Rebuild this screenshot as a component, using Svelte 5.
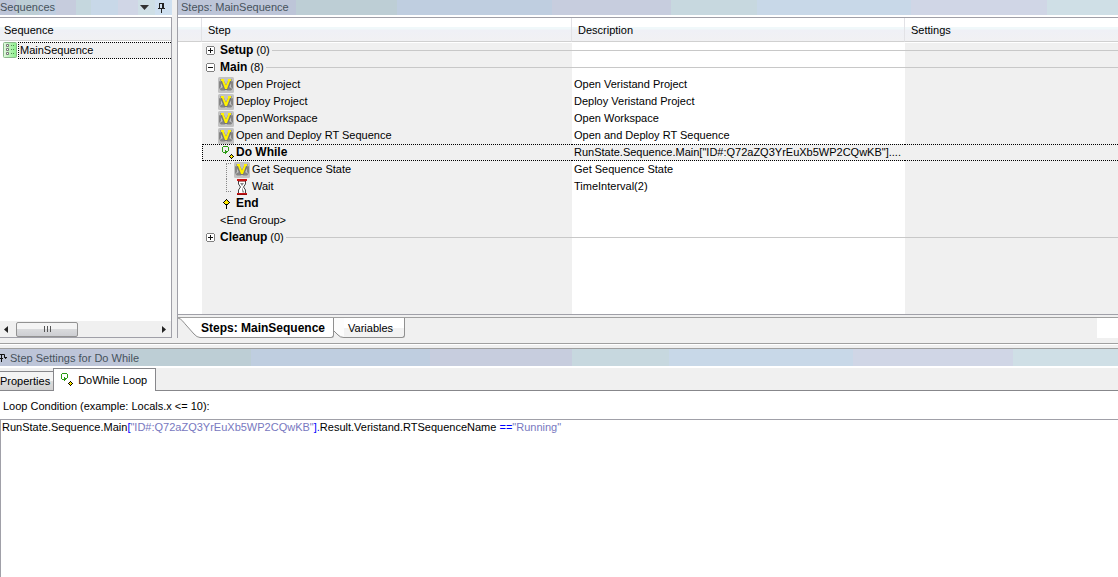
<script>
  const steps = [
    { kind: 'group', name: 'Setup', count: 0, open: false },
    { kind: 'group', name: 'Main', count: 8, open: true },
    { kind: 'step', icon: 'v', name: 'Open Project', desc: 'Open Veristand Project' },
    { kind: 'step', icon: 'v', name: 'Deploy Project', desc: 'Deploy Veristand Project' },
    { kind: 'step', icon: 'v', name: 'OpenWorkspace', desc: 'Open Workspace' },
    { kind: 'step', icon: 'v', name: 'Open and Deploy RT Sequence', desc: 'Open and Deploy RT Sequence' },
    { kind: 'step', icon: 'loop', bold: true, selected: true, name: 'Do While', desc: 'RunState.Sequence.Main["ID#:Q72aZQ3YrEuXb5WP2CQwKB"]....' },
    { kind: 'step', icon: 'v', nested: true, first: true, name: 'Get Sequence State', desc: 'Get Sequence State' },
    { kind: 'step', icon: 'wait', nested: true, last: true, name: 'Wait', desc: 'TimeInterval(2)' },
    { kind: 'step', icon: 'end', bold: true, name: 'End', desc: '' },
    { kind: 'step', plain: true, name: '<End Group>', desc: '' },
    { kind: 'group', name: 'Cleanup', count: 0, open: false }
  ];
  let expression = $state('RunState.Sequence.Main["ID#:Q72aZQ3YrEuXb5WP2CQwKB"].Result.Veristand.RTSequenceName =="Running"');
  const tokens = $derived(expression.split(/("[^"]*"|[\[\].=]+)/).filter(Boolean));
  const tone = (t) => (t[0] === '"' ? 'str' : /^[\[\]=]/.test(t) ? 'op' : '');
</script>

{#snippet icon(name)}
  {#if name === 'v'}
    <svg width="16" height="16" viewBox="0 0 16 16" aria-hidden="true">
      <rect width="16" height="16" rx="1.500" fill="#c2c2c2" />
      <path d="M1 4l2 1v5l-2 2zM15 4l-2 1v5l2 2zM1.500 12L5 10l2 3.500H3zM14.500 12L11 10l-2 3.500h4z" fill="#858585" />
      <path d="M2.500 2H6v2l2 4 2-4V2h3.500v3L9.800 13H6.200L2.500 5z" fill="#777" />
      <path d="M3 2h3v2l2 4.500L10 4V2h3v2h-1L9 12H7L4 4H3z" fill="#fff200" />
    </svg>
  {:else if name === 'loop'}
    <svg width="16" height="16" viewBox="0 0 16 16" shape-rendering="crispEdges" aria-hidden="true">
      <path fill="#2a9a14" d="M5 1h5v1H5zM4 2h1v5H4zM10 2h1v4h-1zM5 7h2v1H5zM7 5h1v4H7zM8 6h2v1H8zM8 7h1v1H8z" />
      <path d="M13 9h1v1h1v1h1v1h-1v1h-1v1h-1v-1h-1v-1h-1v-1h1v-1h1z" />
      <path fill="#ffe800" d="M13 10h1v1h1v1h-1v1h-1v-1h-1v-1h1z" />
    </svg>
  {:else if name === 'wait'}
    <svg width="16" height="16" viewBox="0 0 16 16" aria-hidden="true">
      <path d="M4.500 1.500v3.500l2 3-2 3v3.500h7V11l-2-3 2-3V1.500z" fill="#fff" stroke="#444" />
      <path d="M6 4h4L8 7zM8 8l1 3 1.500 2.500h-2L8 11z" fill="#888" />
      <path fill="#c81414" d="M3 0h10v2H3zM3 14h10v2H3z" />
      <path fill="#600" d="M4 2h8v.5H4zM3 15.500h10v.5H3z" />
    </svg>
  {:else}
    <svg width="16" height="16" viewBox="0 0 16 16" shape-rendering="crispEdges" aria-hidden="true">
      <path d="M8 3h1v1h1v1h1v1h1v1h-1v1h-1v1H9v4H8V9H7V8H6V7H5V6h1V5h1V4h1z" />
      <path fill="#ffe800" d="M8 4h1v1h1v1h1v1h-1v1H7V7H6V6h1V5h1z" />
    </svg>
  {/if}
{/snippet}

<main>
  <div class="upper">
    <section class="sequences">
      <header class="title short">
        <span>Sequences</span>
        <span class="tools">
          <button aria-label="Window menu"><svg width="9" height="5" viewBox="0 0 9 5"><path d="M0 0h9L4.500 5z" fill="#333" /></svg></button>
          <button aria-label="Pin"><svg width="8" height="10" viewBox="0 0 8 10" shape-rendering="crispEdges"><path d="M1 0h5v5h1v1H4v4H3V6H0V5h1zM2 1v4h2V1z" fill="#222" fill-rule="evenodd" /></svg></button>
        </span>
      </header>
      <div class="box">
        <div class="colhead seqhead">Sequence</div>
        <button class="seq">
          <svg width="14" height="16" viewBox="0 0 14 16" aria-hidden="true">
            <defs><linearGradient id="leaf"><stop stop-color="#e4f8e0" /><stop offset="1" stop-color="#88ee88" /></linearGradient></defs>
            <rect x=".5" y=".5" width="13" height="15" rx="1" fill="url(#leaf)" stroke="#8ab88a" />
            <path d="M3.500 2.500h2v2h-2zM3.500 6.500h2v2h-2zM3.500 10.500h2v2h-2z" fill="#fff" stroke="#777" />
            <path d="M8 3h1v1H8zM10 3h1v1h-1zM8 7h1v1H8zM10 7h1v1h-1zM8 11h1v1H8zM10 11h1v1h-1z" fill="#4d8a4d" />
          </svg>
          <span>MainSequence</span>
        </button>
        <div class="space"></div>
        <div class="scroll">
          <button aria-label="Scroll left"><svg width="4" height="7" viewBox="0 0 4 7"><path d="M4 0v7L0 3.500z" fill="#222" /></svg></button>
          <div class="thumb"><i></i><i></i><i></i></div>
          <button class="right" aria-label="Scroll right"><svg width="4" height="7" viewBox="0 0 4 7"><path d="M0 0v7l4-3.500z" fill="#222" /></svg></button>
        </div>
      </div>
    </section>

    <section class="steps">
      <header class="title wide">Steps: MainSequence</header>
      <div class="grid">
        <table>
          <colgroup><col class="c0" /><col class="c1" /><col class="c2" /><col /></colgroup>
          <thead>
            <tr><th></th><th>Step</th><th>Description</th><th>Settings</th></tr>
          </thead>
          <tbody>
            {#each steps as s}
              {#if s.kind === 'group'}
                <tr>
                  <td></td>
                  <td colspan="3">
                    <div class="group">
                      <button class="toggle" aria-label={s.name} aria-expanded={s.open}>
                        <svg width="9" height="9" viewBox="0 0 9 9" shape-rendering="crispEdges">
                          <path d="M1 0h7v1h1v7H8v1H1V8H0V1h1z" fill="#808080" />
                          <path d="M1 1h7v7H1z" fill="#fff" />
                          <path d={s.open ? 'M2 4h5v1H2z' : 'M2 4h2V2h1v2h2v1H5v2H4V5H2z'} fill="#111" />
                        </svg>
                      </button>
                      <b>{s.name}</b><span>({s.count})</span><hr />
                    </div>
                  </td>
                </tr>
              {:else}
                <tr class:selected={s.selected}>
                  <td></td>
                  <td>
                    <div class="step" class:nested={s.nested} class:first={s.first} class:last={s.last} class:plain={s.plain} class:bold={s.bold}>
                      {#if s.icon}{@render icon(s.icon)}{/if}<span>{s.name}</span>
                    </div>
                  </td>
                  <td class="desc">{s.desc}</td>
                  <td></td>
                </tr>
              {/if}
            {/each}
          </tbody>
        </table>
      </div>
      <nav class="tabs">
        <button class="tab active">
          <svg width="22" height="20" viewBox="0 0 22 20" aria-hidden="true"><path d="M0 0h22v20C18 20 17 17 14 14L3 2z" fill="#fff" /><path d="M0 0C4 1 6 5 8 7l8 9q3 3.500 6 3.500" fill="none" stroke="#8c8c8c" /></svg>
          <span>Steps: MainSequence</span>
        </button>
        <button class="tab">
          <svg width="10" height="20" viewBox="0 0 10 20" aria-hidden="true"><path d="M0 0h10v20L0 13z" fill="#fcfcfc" /><path d="M0 13v7h10q-4 0-6-3z" fill="#f0f0f0" /><path d="M0 13l4 4q2 2.500 6 2.500" fill="none" stroke="#8c8c8c" /></svg>
          <span>Variables</span>
        </button>
        <div class="corner"></div>
      </nav>
    </section>
  </div>

  <section class="settings">
    <header class="title low">
      <svg width="8" height="10" viewBox="0 0 8 10" aria-hidden="true"><path d="M0 1.500h4.500v3H7M0 5.500h3M1.500 2v7M4.500 4l1.500 2" fill="none" stroke="#111" /></svg>
      <span>Step Settings for Do While</span>
    </header>
    <nav class="pages">
      <button>Properties</button>
      <button class="current">{@render icon('loop')}<span>DoWhile Loop</span></button>
    </nav>
    <div class="page">
      <label for="cond">Loop Condition (example: Locals.x &lt;= 10):</label>
      <div class="editor">
        <div class="paint" aria-hidden="true">{#each tokens as t}<span class={tone(t)}>{t}</span>{/each}</div>
        <textarea id="cond" spellcheck="false" bind:value={expression}></textarea>
      </div>
    </div>
  </section>
</main>

<style>
  :global(body) { background: #f0f0f0; }
  main {
    display: flex; flex-direction: column; min-height: 100vh;
    font: 11px/17px "Liberation Sans", Arial, sans-serif; color: #000;
    background: #f0f0f0;
  }
  button {
    font: inherit; color: inherit; border: 0; padding: 0; background: none;
    display: flex; align-items: center;
  }
  svg { display: block; flex: none; }
  .upper { display: flex; gap: 5px; }
  .title {
    box-sizing: border-box; height: 17px; border-bottom: 2px solid #fff;
    display: flex; align-items: center; color: #46525c; white-space: nowrap;
  }
  .short { background: linear-gradient(90deg, #bdc5d8 0 16px, #bdced5 16px 39px, #bfcee0 39px 56px, #c6ccdd 56px 76px, #c5d7de 76px 91px, #c8d8e8 91px 118px, #d0d6e6 118px 138px, #cfdfe6 138px 155px, #cfe0f0 155px); }
  .wide {
    padding-left: 3px;
    background: linear-gradient(90deg, #bdc5d8 0 118px, #bdced5 118px 219px, #bfcee0 219px 374px, #c7cdde 374px 493px, #c7d8df 493px 579px, #c8d8e8 579px 733px, #d0d6e6 733px 869px, #cfdfe6 869px);
  }
  .tools { margin-left: auto; display: flex; align-items: center; gap: 9px; padding-right: 6px; }
  .sequences { width: 172px; flex: none; display: flex; flex-direction: column; }
  .box {
    flex: 1; display: flex; flex-direction: column; background: #fff;
    border: 1px solid #a0a0a8; border-left: 0;
  }
  .colhead, th {
    background: linear-gradient(#fff 0 9px, #f0f8fa 9px 11px, #eff0f6 12px, #f1f1f3);
    border-bottom: 1px solid #d0d0d0;
  }
  .seqhead { height: 22px; line-height: 24px; padding-left: 4px; }
  .seq { height: 18px; padding-left: 3px; gap: 1px; }
  .seq span { flex: 1; text-align: left; background: #f0f0f0; border: 1px dotted #000; border-right: 0; line-height: 15px; padding-left: 1px; }
  .space { flex: 1; }
  .scroll { height: 16px; background: #f0f0f0; display: flex; align-items: center; padding: 0 5px 0 4px; gap: 8px; }
  .scroll .right { margin-left: auto; }
  .thumb {
    box-sizing: border-box; width: 62px; height: 15px; border: 1px solid #929292; border-radius: 2px;
    display: flex; justify-content: center; align-items: center; gap: 2px;
    background: linear-gradient(#f4f4f4 0 50%, #d9dadc 50%, #cdced2);
  }
  .thumb i { width: 1px; height: 6px; background: #555; }
  .steps { flex: 1; min-width: 0; border-left: 1px solid #a0a0a8; }
  .grid {
    min-height: 296px; border: 1px solid #a0a0a8; border-width: 1px 0; box-sizing: content-box;
    background: linear-gradient(90deg, #fff 0 24px, #f0f0f0 24px 394px, #fff 394px 727px, #f0f0f0 727px);
  }
  table { width: 100%; table-layout: fixed; border-collapse: separate; border-spacing: 0; }
  .c0 { width: 24px; }
  .c1 { width: 370px; }
  .c2 { width: 333px; }
  th { height: 22px; padding: 1px 0 0 6px; font-weight: 400; text-align: left; border-right: 1px solid #e2e2e6; box-shadow: 0 1px #fff; }
  th:last-child { border-right: 0; }
  td { height: 17px; padding: 0; white-space: nowrap; }
  .group { display: flex; align-items: center; padding-left: 4px; height: 17px; }
  .group b { margin: 0 3px 0 5px; font-size: 12px; }
  hr { flex: 1; margin: 0 0 0 2px; border: 0; border-top: 1px solid #c8c8c8; }
  .step { display: flex; align-items: center; height: 17px; padding-left: 16px; gap: 2px; }
  .nested { margin-left: 16px; position: relative; }
  .nested::before {
    content: ""; position: absolute; left: 8px; top: 0; height: 17px; width: 4px;
    border-left: 1px dotted #888;
  }
  .nested.first::before { top: 2px; height: 15px; border-top: 1px dotted #888; }
  .nested.last::before { height: 13px; border-bottom: 1px dotted #888; }
  .step.plain { padding-left: 18px; }
  .bold { font-size: 12px; font-weight: 700; }
  .desc { padding-left: 2px; overflow: hidden; }
  .selected td:not(:first-child) {
    background:
      repeating-linear-gradient(90deg, #000 0 1px, transparent 1px 2px) top / 100% 1px no-repeat,
      repeating-linear-gradient(90deg, #000 0 1px, transparent 1px 2px) bottom / 100% 1px no-repeat,
      #f0f0f0;
  }
  .selected td:nth-child(2) { border-left: 1px dotted #000; }
  .selected .step { margin-left: -1px; }
  .tabs { display: flex; margin-top: 2px; border-top: 1px solid #a0a0a0; height: 20px; }
  .tab span { box-sizing: border-box; height: 20px; line-height: 20px; background: linear-gradient(#fff 55%, #f2f2f2 55%); border: 1px solid #909090; border-width: 0 1px 1px 0; border-radius: 0 0 3px; padding: 0 11px 0 4px; }
  .active span { background: #fff; font-size: 12px; font-weight: 700; padding: 0 8px 0 1px; }
  .corner { margin-left: auto; width: 21px; background: #fff; }
  .settings { flex: 1; display: flex; flex-direction: column; margin-top: 5px; border-top: 1px solid #a0a0a0; box-shadow: inset 0 1px #fff; padding-top: 4px; }
  .low {
    height: 20px; border-top: 1px solid #a0a0a0; gap: 2px; padding-top: 1px;
    background: linear-gradient(90deg, #bdc5d8 0 130px, #bdced5 130px 251px, #bfcee0 251px 430px, #c7cdde 430px 572px, #c7d8df 572px 669px, #c8d8e8 669px 853px, #d0d6e6 853px 1013px, #cfdfe6 1013px);
  }
  .pages { display: flex; align-items: flex-end; height: 22px; border-bottom: 1px solid #87878b; }
  .pages button { height: 19px; padding-right: 3px; border: 1px solid #87878b; border-width: 1px 0 0; background: linear-gradient(#f4f4f4 50%, #dcdcdc 50%, #d2d2d2); box-sizing: border-box; }
  .pages .current { height: 23px; margin-bottom: -1px; background: #fff; border-width: 1px 1px 0; padding: 0 8px 0 3px; gap: 5px; }
  .page { flex: 1; display: flex; flex-direction: column; background: #fff; }
  label { padding: 7px 0 4px 3px; }
  .editor { flex: 1; display: grid; border: 1px solid #a0a0a8; border-width: 1px 0 0 1px; }
  .paint, textarea {
    grid-area: 1 / 1; font: 11px/15px "Liberation Sans", Arial, sans-serif; padding: 0 1px;
    margin: 0; border: 0; white-space: pre-wrap;
  }
  textarea { background: none; color: transparent; caret-color: #000; resize: none; outline: 0; }
  .str { color: #7878c0; }
  .op { color: #0000ff; }
</style>
